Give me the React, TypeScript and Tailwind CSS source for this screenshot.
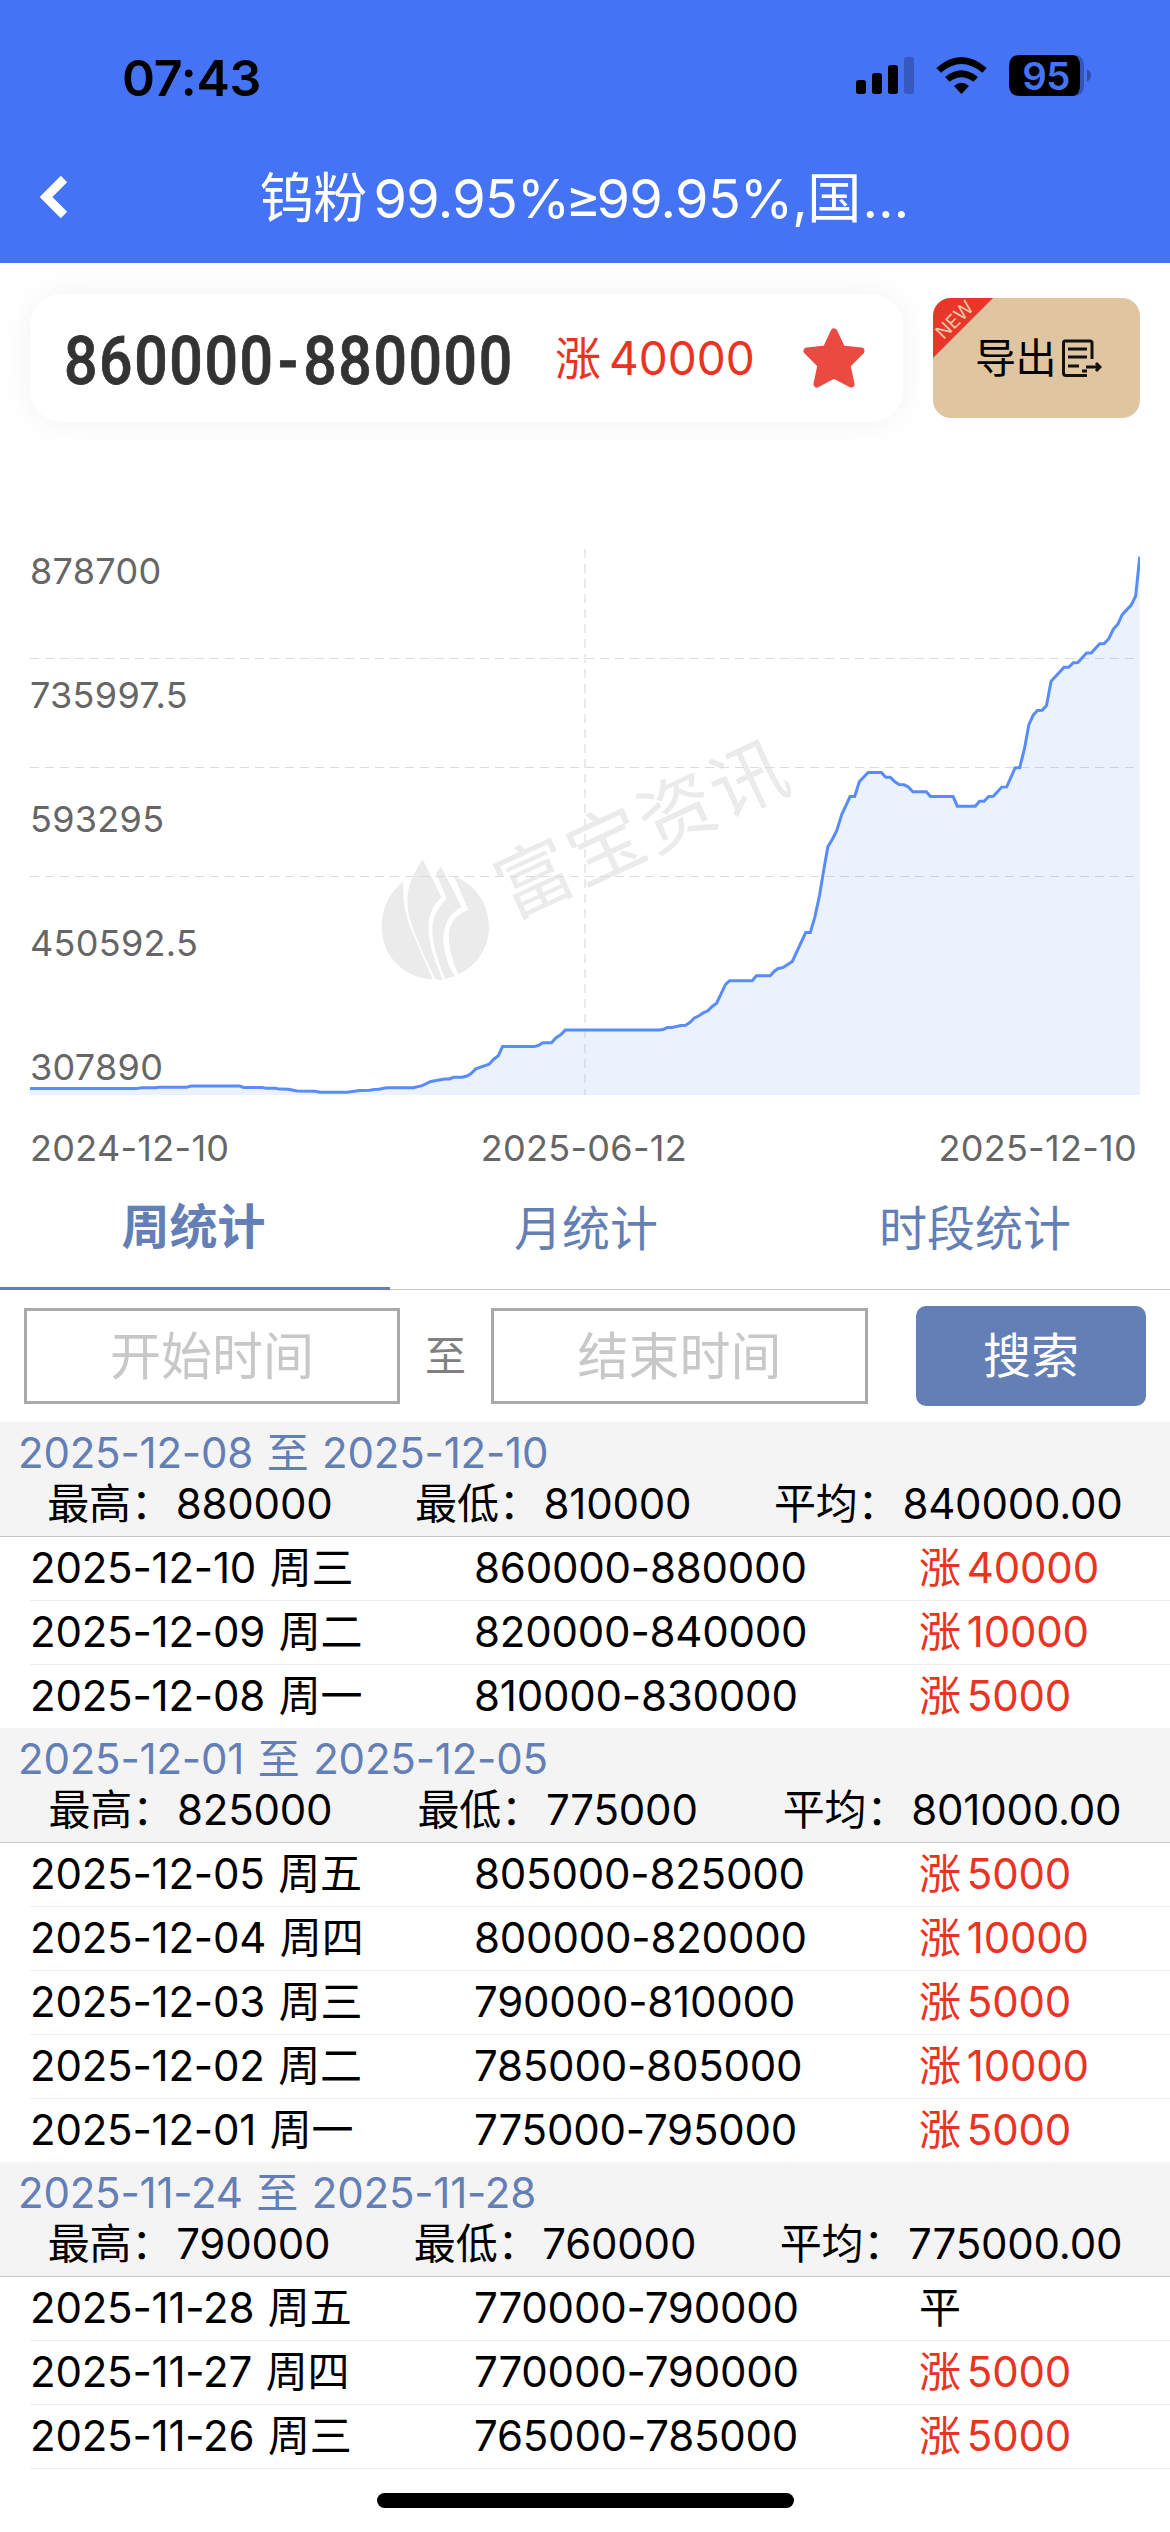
type Row = { date: string; range: string; change: number };
type Week = { from: string; to: string; high: string; low: string; avg: string; rows: Row[] };

const weeks: Week[] = [
  {
    from: "2025-12-08",
    to: "2025-12-10",
    high: "880000",
    low: "810000",
    avg: "840000.00",
    rows: [
      { date: "2025-12-10 周三", range: "860000-880000", change: 40000 },
      { date: "2025-12-09 周二", range: "820000-840000", change: 10000 },
      { date: "2025-12-08 周一", range: "810000-830000", change: 5000 },
    ],
  },
  {
    from: "2025-12-01",
    to: "2025-12-05",
    high: "825000",
    low: "775000",
    avg: "801000.00",
    rows: [
      { date: "2025-12-05 周五", range: "805000-825000", change: 5000 },
      { date: "2025-12-04 周四", range: "800000-820000", change: 10000 },
      { date: "2025-12-03 周三", range: "790000-810000", change: 5000 },
      { date: "2025-12-02 周二", range: "785000-805000", change: 10000 },
      { date: "2025-12-01 周一", range: "775000-795000", change: 5000 },
    ],
  },
  {
    from: "2025-11-24",
    to: "2025-11-28",
    high: "790000",
    low: "760000",
    avg: "775000.00",
    rows: [
      { date: "2025-11-28 周五", range: "770000-790000", change: 0 },
      { date: "2025-11-27 周四", range: "770000-790000", change: 5000 },
      { date: "2025-11-26 周三", range: "765000-785000", change: 5000 },
    ],
  },
];

const yLabels = ["878700", "735997.5", "593295", "450592.5", "307890"];

// plot area is 1110 x 546
const line =
  "0,539.6 107,539.6 111,538.8 125,538.8 129,538.2 156.4,538.2 161.4,537.1 209.6,537.1 213.8,538.4 232,538.4 236,539.2 245.5,539.2 249.4,540.1 258.6,540.3 267,542 285.3,542.2 290,543.2 317,543.2 329.7,541.5 339.7,541.3 344.3,540.5 348.9,540.3 356.5,538.8 383.3,538.8 392.1,536.7 400.9,532.5 414.7,530 419.3,530 423.5,528.3 432.3,528.3 436.9,527 441.1,524.5 445.7,519.9 459.1,515.2 463.7,510.2 468.3,506.8 472.5,497.6 504.3,497.6 508.8,496.3 512.7,493.8 521.5,493.8 526.1,488.7 530.7,485.8 535.2,481.1 " +
  "629.2,481.1 633,480.5 637.2,478.6 641.8,478.4 651,476.5 655.6,476.3 659.8,473.6 664.4,468.9 669,466.8 673.2,463.9 677.8,461.8 682,457.6 686.6,454.2 695.4,435.7 699.6,431.7 722.2,431.7 726.4,426.8 740.2,426.8 744.4,422.2 747.8,419.7 753.2,418.4 762.3,412.5 775.7,383.5 780.3,383.5 784.9,367.9 789.5,346.5 793.7,321.2 797.9,297.6 802.5,290 806.7,281.6 811.7,265.6 820.1,247.5 824.7,247.5 829.3,232.8 838.1,223.5 851.5,223.5 855.7,228.2 860.3,228.2 864.9,232.8 869.1,235.5 874.1,235.8 878.3,237.9 882.9,242.7 896.3,242.7 900.5,247.5 923.1,247.5 927.3,257.2 945.3,257.2 949.5,252.2 954.1,252.2 958.7,247.5 963.3,247.3 971.7,238.1 976.7,237.9 985.1,218.9 989.7,218.5 994.3,200.4 998.9,175.6 1003.1,166.3 1007.3,161.5 1012.2,161.3 1016.5,156.6 1021.1,132.2 1034.1,118.3 1038.7,118.3 1043.3,113.7 1047.8,113.5 1056.6,104 1061.2,104 1069.7,94.7 1074.3,94.5 1078.8,89.7 1083.4,80 1088,75 1092.2,65.7 1101,56.4 1105.6,47.2 1109.8,7.6";

/* ── Status bar + title ── */
function Header() {
  return (
    <header className="h-[263px] bg-[#4573f5] flex flex-col">
      <div className="h-[133px] pt-[23px] pl-[122px] pr-[60px] flex items-center justify-between">
        <span className="text-[50px] leading-none font-semibold text-black tracking-[-0.2px]">07:43</span>
        <svg className="w-[270px] h-[80px]" viewBox="0 0 810 240">
          <rect x="48" y="126" width="30" height="42" rx="8" />
          <rect x="96" y="105" width="30" height="63" rx="8" />
          <rect x="144" y="81" width="30" height="87" rx="8" />
          <rect x="192" y="57" width="30" height="111" rx="8" opacity="0.22" />
          <path d="M289 90 Q364 24 440 90 L427 104 Q364 52 303 104 Z" />
          <path d="M315 117 Q364 76 414 117 L400 131 Q364 104 329 131 Z" />
          <path d="M342 144 Q364 125 387 144 L364 168 Z" />
          <path d="M700 51 Q732 51 732 84 V141 Q732 174 700 174 Z" opacity="0.25" />
          <path d="M540 51 H700 Q720 55 720 84 V141 Q720 170 700 174 H540 Q507 174 507 141 V84 Q507 51 540 51 Z" />
          <path d="M741 94 Q753 100 753 112.500 Q753 125 741 131 Z" opacity="0.3" />
          <text x="618" y="155" textAnchor="middle" fontSize="115" fontWeight="600" fill="#4573f5" letterSpacing="-2">
            95
          </text>
        </svg>
      </div>
      <div className="flex-1 flex items-center pl-[38px] pr-[38px]">
        <svg className="w-[34px] h-[48px]" viewBox="0 0 34 48">
          <path d="M26 5 L8 23 L26 41" fill="none" stroke="#fff" strokeWidth="9" strokeLinejoin="miter" />
        </svg>
        <h1 className="flex-1 pt-[1px] text-center text-[54px] leading-[80px] text-white whitespace-nowrap tracking-[-0.7px]">
          <span className="mr-[7px]">钨粉</span>99.95%<span className="-mx-[4px]">≥</span>99.95%,国
          <span className="ml-[2px] tracking-[1px]">…</span>
        </h1>
        <div className="w-[34px]" />
      </div>
    </header>
  );
}

/* ── Current price + export ── */
function PriceBar() {
  return (
    <div className="h-[190px] pt-[31px] pl-[30px] pr-[30px] flex items-start justify-between">
      <div className="w-[873px] h-[128px] rounded-[32px] bg-white shadow-[0_0_34px_rgba(0,0,0,0.055)] flex items-center pl-[34px]">
        <div className="w-[459px] mt-[6px] font-['Roboto'] font-medium text-[67px] leading-none text-[#333]">
          <span className="inline-block origin-left scale-x-[0.88] tracking-[1.8px] whitespace-nowrap [-webkit-text-stroke:0.8px_#333]">
            860000<span className="mx-[4px]">-</span>880000
          </span>
        </div>
        <span className="w-[244px] text-[46px] leading-none text-[#e93323] whitespace-nowrap pl-[32px]">
          <span className="mr-[8px]">涨</span>40000
        </span>
        <svg className="w-[62px] h-[61px] ml-[36px]" viewBox="0 0 62 61">
          <path
            d="M31 4 L39 21 L58 23 L44 37 L48 56 L31 47 L14 56 L18 37 L4 23 L23 21 Z"
            fill="#eb4a42"
            stroke="#eb4a42"
            strokeWidth="7"
            strokeLinejoin="round"
          />
        </svg>
      </div>
      <button className="relative mt-[4px] w-[207px] h-[120px] rounded-[18px] bg-[#dfc5a0] overflow-hidden flex items-center gap-[6px] pl-[42px]">
        <svg className="absolute left-0 top-0 w-[60px] h-[60px]" viewBox="0 0 60 60">
          <path d="M0 0 H60 L0 60 Z" fill="#e9362b" />
          <text x="21.500" y="29" textAnchor="middle" fontSize="19" fill="#e8c9a4" transform="rotate(-45 21 22)">NEW</text>
        </svg>
        <span className="text-[41px] leading-none text-black tracking-[-0.5px]">导出</span>
        <svg className="w-[40px] h-[40px]" viewBox="0 0 40 40" fill="none" stroke="#111" strokeWidth="3">
          <path d="M30 21 V5 Q30 3 28 3 H3 Q1.500 3 1.500 5 V35 Q1.500 37.500 4 37.500 H25" />
          <path d="M6 11 H25 M6 19 H25 M6 28 H17 M20 33 H25 M24 29 H37 M34 25 L38 29 L34 33" />
        </svg>
      </button>
    </div>
  );
}

function Watermark() {
  return (
    <g fill="#ebebeb">
      <g transform="translate(320 161) scale(0.33333)">
        <path d="M160 515 Q95 565 95 650 C95 745 170 805 248 808 L180 650 C162 600 158 560 160 515 Z" />
        <path d="M218 448 C190 490 172 530 172 570 C173 630 200 690 256 808 L278 810 C250 740 235 700 236 650 C237 600 258 580 274 561 Z" />
        <path d="M258 490 L273 470 L335 590 C300 610 280 640 280 690 C282 730 295 770 315 798 L286 808 C262 750 246 700 247 655 C248 610 270 590 290 565 Z" />
        <path d="M312 498 C380 525 417 585 417 655 C415 715 380 770 325 792 C305 750 293 700 297 665 C305 625 330 610 355 600 Z" />
      </g>
      <text x="612.500" y="308" textAnchor="middle" fontSize="76" letterSpacing="2.500" transform="rotate(-24.8 609.700 280.500)">
        富宝资讯
      </text>
    </g>
  );
}

function Chart() {
  return (
    <section className="h-[715px] px-[30px] pt-[96px] flex flex-col">
      <div className="relative h-[546px]">
        <svg className="w-[1110px] h-[546px]" viewBox="0 0 1110 546">
          <Watermark />
          <path
            d="M0 109.500 H1110 M0 218.500 H1110 M0 327.500 H1110"
            stroke="#dcdcdc"
            strokeWidth="1"
            strokeDasharray="9 6"
          />
          <path d="M555 0 V546" stroke="#ebebeb" strokeWidth="2" strokeDasharray="9 6" />
          <polygon points={`0,546 ${line} 1110,546`} fill="#4080e8" fillOpacity="0.1" />
          <polyline points={line} fill="none" stroke="#588cfa" strokeWidth="3" />
        </svg>
        <div className="absolute left-0 top-0 text-[#666] text-[36px] leading-[124px] -mt-[40px] tracking-[0.3px]">
          {yLabels.map((l) => (
            <div key={l}>{l}</div>
          ))}
        </div>
      </div>
      <div className="pt-[33px] pr-[3px] flex justify-between text-[36px] leading-[40px] text-[#666] tracking-[0.3px]">
        <span>2024-12-10</span>
        <span>2025-06-12</span>
        <span>2025-12-10</span>
      </div>
    </section>
  );
}

/* ── Tabs + date filter ── */
function Filters() {
  return (
    <>
      <nav className="h-[122px] border-b border-[#c8c8c8] grid grid-cols-3 text-center text-[48px] leading-[122px] text-[#637fb6]">
        <span className="border-b-3 border-[#637fb6] font-bold leading-[117px] pr-[3px]">周统计</span>
        <span className="pl-[2px]">月统计</span>
        <span>时段统计</span>
      </nav>
      <div className="h-[132px] flex items-center px-[24px] text-[51px] leading-none">
        <div className="w-[376px] h-[96px] border-3 border-[#a9a9a9] text-[#c8c8c8] flex items-center justify-center">开始时间</div>
        <span className="w-[91px] text-center text-[41px] text-[#808080]">至</span>
        <div className="w-[377px] h-[96px] border-3 border-[#a9a9a9] text-[#c8c8c8] flex items-center justify-center">结束时间</div>
        <button className="ml-auto w-[230px] h-[100px] rounded-[10px] bg-[#637fb6] text-white text-[48px]">搜索</button>
      </div>
    </>
  );
}

function Stat({ label, value }: { label: string; value: string }) {
  return (
    <span>
      {label}：<span className="ml-[3px]">{value}</span>
    </span>
  );
}

function WeekBlock({ week }: { week: Week }) {
  return (
    <section className="text-[42px] tracking-[-0.2px] [word-spacing:2px] text-black">
      <div className="h-[114px] bg-[#f4f4f4]">
        <div className="pl-[18px] pt-[5px] leading-[51px] text-[#637fb6]">
          {week.from} 至 {week.to}
        </div>
        <div className="flex justify-around px-[6px] leading-[51px]">
          <Stat label="最高" value={week.high} />
          <Stat label="最低" value={week.low} />
          <Stat label="平均" value={week.avg} />
        </div>
      </div>
      {week.rows.map((r, i) => (
        <div key={r.date} className={i === 0 ? "border-t border-[#c8c8c8] pl-[30px]" : "ml-[30px] border-t border-[#ececec]"}>
          <div className="h-[63px] leading-[61px] flex">
            <span className="w-[444px]">{r.date}</span>
            <span className="w-[445px]">{r.range}</span>
            {r.change > 0 ? (
              <span className="text-[#e93323]">
                <span className="mr-[6px]">涨</span>
                {r.change}
              </span>
            ) : (
              <span>平</span>
            )}
          </div>
        </div>
      ))}
    </section>
  );
}

export default function App() {
  return (
    <div className="w-[1170px] h-[2532px] overflow-hidden bg-white flex flex-col font-['Inter','Noto_Sans_CJK_SC',sans-serif]">
      <Header />
      <PriceBar />
      <Chart />
      <Filters />
      {weeks.map((w) => (
        <WeekBlock key={w.from} week={w} />
      ))}
      <div className="ml-[30px] border-t border-[#ececec]" />
      {/* home indicator */}
      <div className="mt-[24px] mx-auto w-[417px] h-[15px] rounded-full bg-black" />
    </div>
  );
}
